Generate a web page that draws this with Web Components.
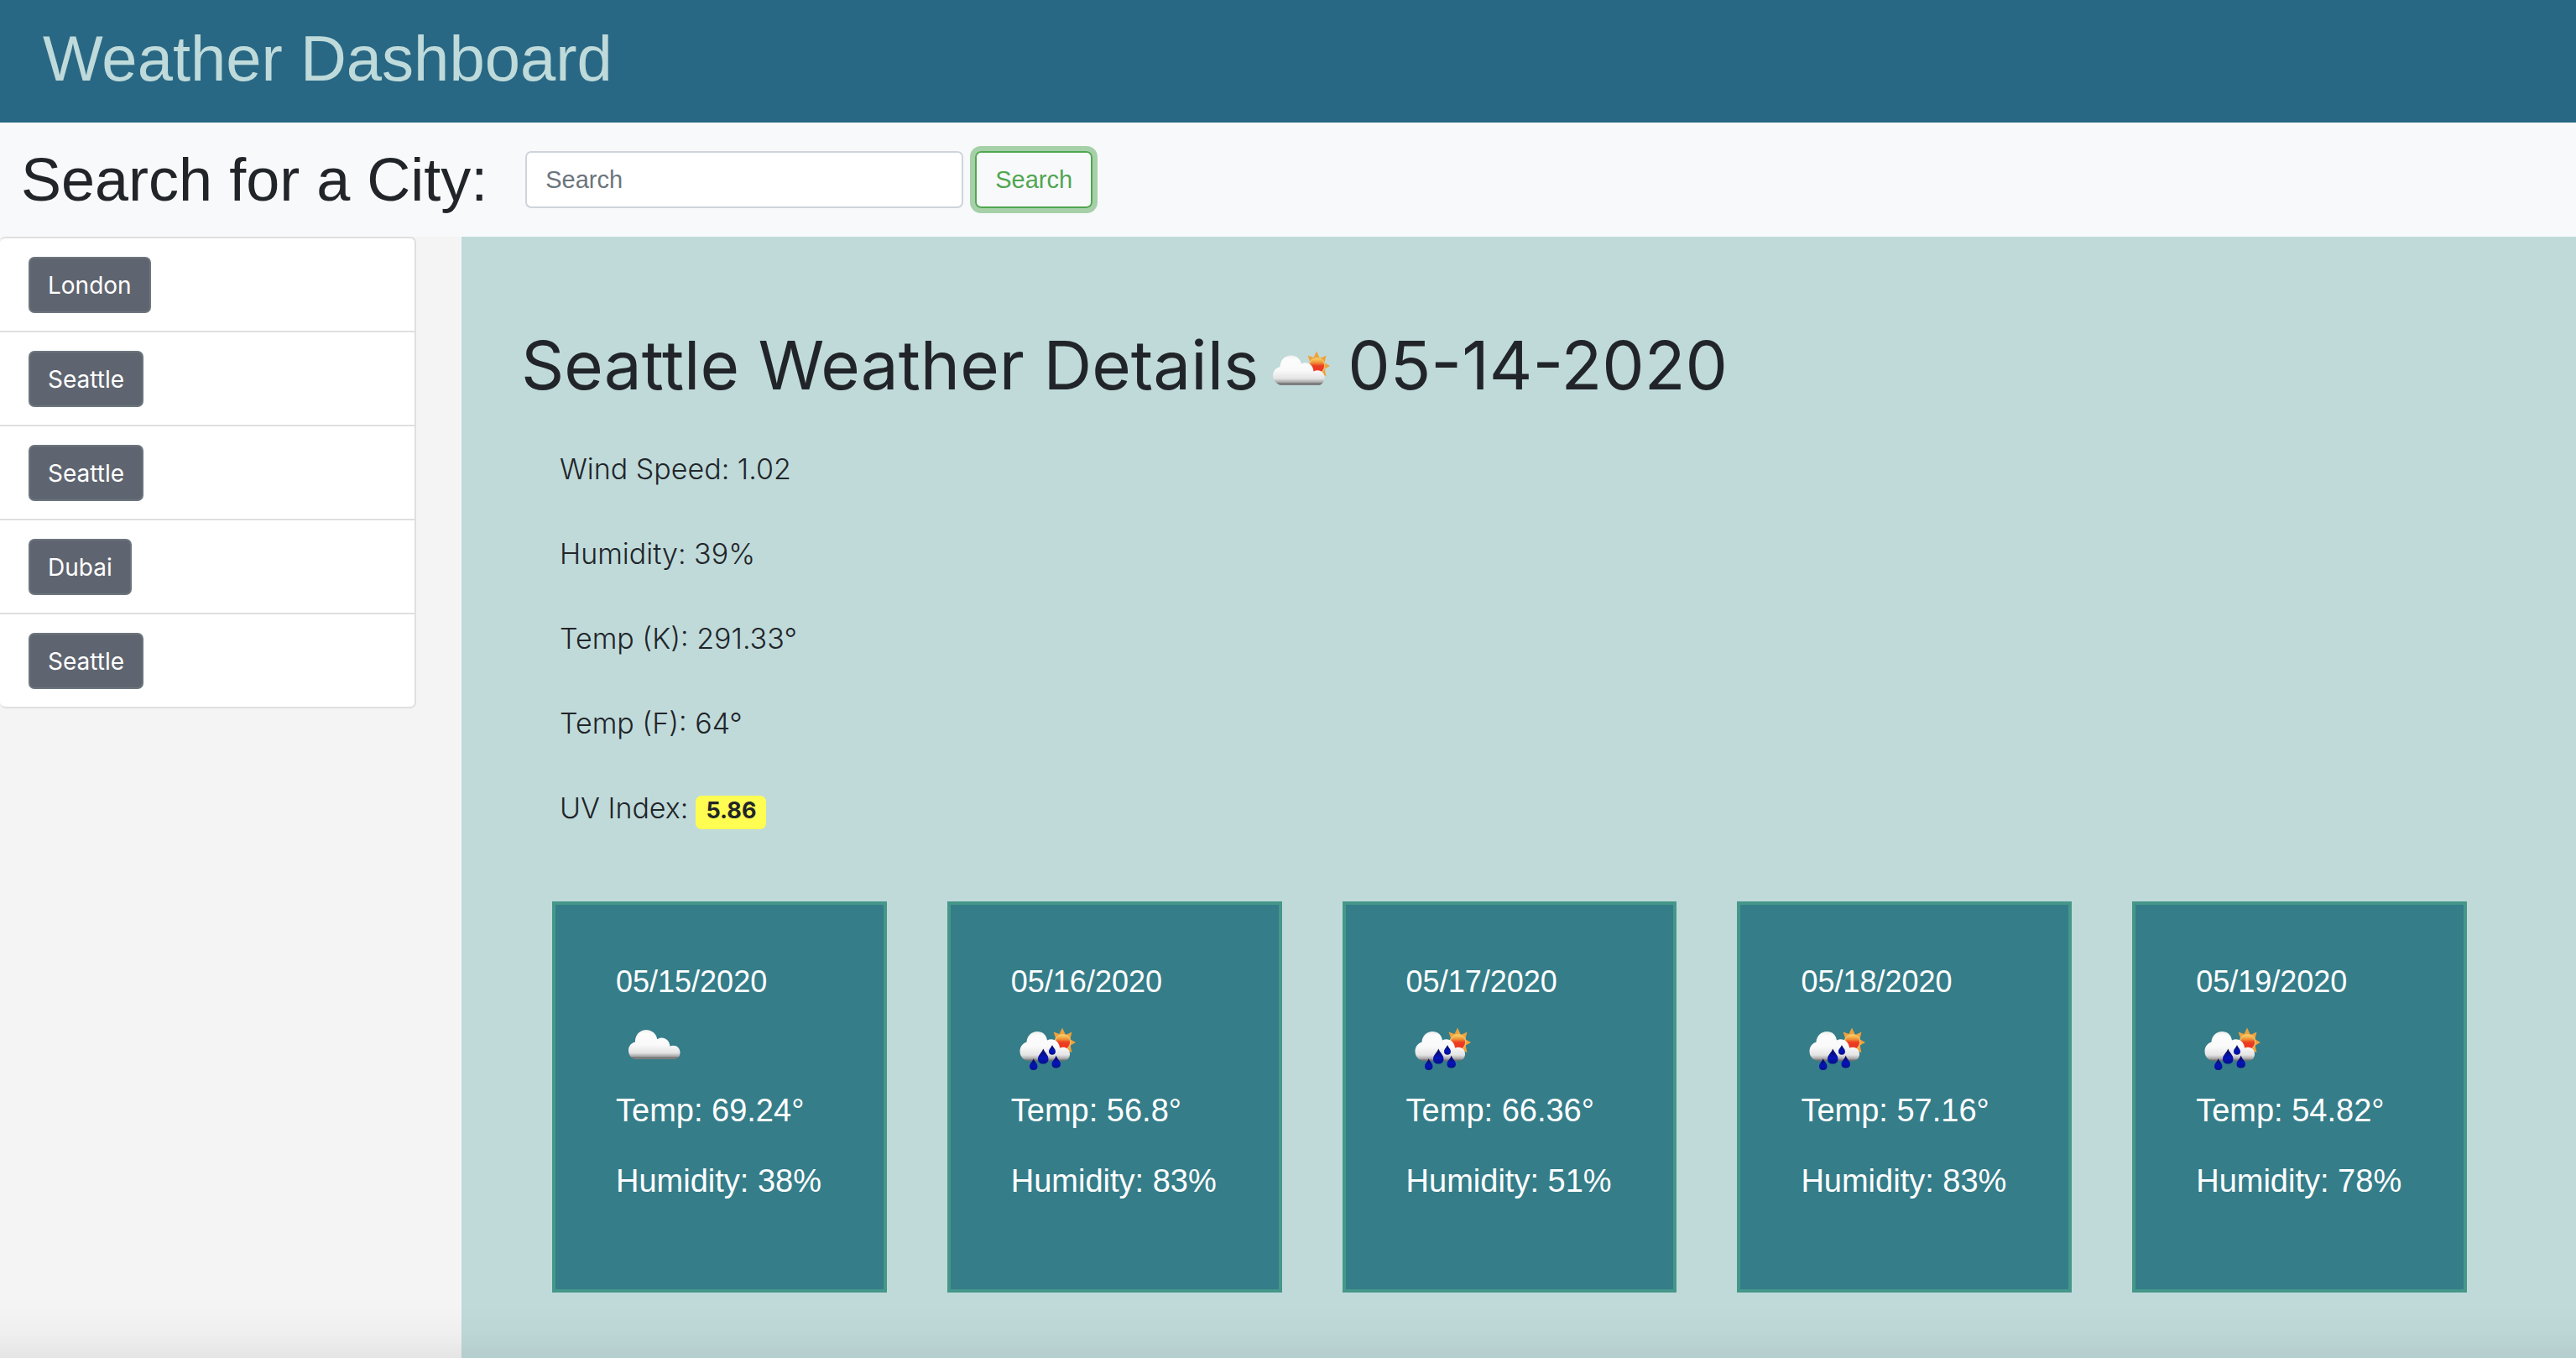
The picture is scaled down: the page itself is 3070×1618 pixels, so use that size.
<!DOCTYPE html>
<html lang="en">
<head>
<meta charset="utf-8">
<title>Weather Dashboard</title>
<style>
  body { margin: 0; background: #f4f4f4; color: #212529; font-family: Inter, "Noto Sans", sans-serif; }
</style>
</head>
<body>
<weather-app></weather-app>
<script>
function define(name, html, init) {
  const tpl = document.createElement('template');
  tpl.innerHTML = '<style>*{box-sizing:border-box;margin:0}:host{display:block;box-sizing:border-box}</style>' + html;
  customElements.define(name, class extends HTMLElement {
    constructor() {
      super();
      this.attachShadow({ mode: 'open' }).append(tpl.content.cloneNode(true));
    }
    connectedCallback() { if (init) init(this, this.shadowRoot); }
  });
}

const SUN = `
  <g fill="#efa23a">
    <path d="M61 20.5 L65 29 L57 29 Z"/><path d="M50.5 25.5 L59 28.5 L53.5 34 Z"/>
    <path d="M72.5 25.5 L70.5 34 L65 29 Z"/><path d="M77 38 L69 42.5 L69 33.5 Z"/>
    <path d="M72.5 50 L64 47 L70.5 41 Z"/>
  </g>
  <circle cx="61.5" cy="37.7" r="10" fill="#f3c06a"/>
  <circle cx="61.5" cy="37.9" r="8.6" fill="url(#sun)"/>`;
const DEFS = (top, bottom) => `<defs>
  <linearGradient id="sun" x1="0" y1="0" x2="0" y2="1">
    <stop offset="0" stop-color="#f9d35c"/><stop offset=".3" stop-color="#f08a35"/><stop offset=".5" stop-color="#ea3e22"/><stop offset="1" stop-color="#ee3322"/>
  </linearGradient>
  <linearGradient id="cloud" gradientUnits="userSpaceOnUse" x1="0" y1="${top}" x2="0" y2="${bottom}">
    <stop offset="0" stop-color="#ececec"/><stop offset=".12" stop-color="#fcfcfc"/><stop offset=".5" stop-color="#fafafa"/>
    <stop offset=".78" stop-color="#e4e4e4"/><stop offset=".9" stop-color="#a8a8a8"/><stop offset=".95" stop-color="#707070"/><stop offset="1" stop-color="#8a8a8a"/>
  </linearGradient>
  <linearGradient id="drop" x1="0" y1="0" x2="0" y2="1">
    <stop offset="0" stop-color="#0a0a50"/><stop offset=".6" stop-color="#0514b8"/><stop offset="1" stop-color="#04108a"/>
  </linearGradient></defs>`;
const ICONS = {
  cloudy: DEFS(23, 58) + `<path fill="url(#cloud)" d="M24 58 C18.500 58 15 53 15 47.500 C15 42 18.500 38.500 23 37.500 C22.500 29 29 23 36 23 C43 23 48.500 28 49.200 34.200 C56 29.500 64 34.500 64.500 42.500 C71 40 76.500 44 76.500 50 C76.500 54 74.500 58 70 58 Z"/>`,
  partly: DEFS(33, 69) + `<g transform="translate(1 8)">${SUN}</g><path fill="url(#cloud)" d="M19 69 C13.500 67 10 62.500 10 57.500 C10 52 13.500 48.500 18.500 47 C19 38.500 24.500 33.500 31.500 33.500 C38 33.500 42.500 37.500 44 43.500 C51 40 58 44.500 58.500 52.500 C66 49 72 54 71.500 60.500 C71 65 68.500 68 65.500 69 Z"/>`,
  rain: DEFS(25, 61) + SUN + `<path fill="url(#cloud)" d="M19 60 C14 58.500 10.500 54 10.500 48.500 C10.500 43 14 39 18.500 37.500 C19 30 24.500 25 31 25 C37.500 25 42 29 43 35.500 C49.500 32 57.500 36.500 58 44.500 C65.500 42 70.500 46.500 70 52.500 C69.500 57 67 59.500 63 60 Z"/>
    <g fill="url(#drop)">
      <path d="M26.700 57 C28 61 31.500 63 31.500 66.500 C31.500 69.500 29.500 71 26.700 71 C24 71 22 69.500 22 66.500 C22 63 25.500 61 26.700 57 Z"/>
      <path d="M38.300 45.500 C40 50 44.500 53 44.500 57.500 C44.500 61.500 42 63.500 38.300 63.500 C34.500 63.500 32 61.500 32 57.500 C32 53 36.800 50 38.300 45.500 Z"/>
      <path d="M49 41 C50 44 53 46 53 48.700 C53 51.300 51.500 52.700 49 52.700 C46.500 52.700 45 51.300 45 48.700 C45 46 48 44 49 41 Z"/>
      <path d="M53.700 53.500 C55 58 59 60 59 63.700 C59 67 56.800 68.500 53.700 68.500 C50.500 68.500 48.500 67 48.500 63.700 C48.500 60 52.500 58 53.700 53.500 Z"/>
    </g>`
};

define('weather-icon', `
  <style>:host{width:90px;height:90px;flex:none} svg{display:block}</style>
  <svg width="90" height="90" viewBox="0 0 90 90" aria-hidden="true"></svg>`,
  (el, root) => { root.querySelector('svg').innerHTML = ICONS[el.getAttribute('kind')]; });

define('app-header', `
  <style>
    :host{background:#296884;padding:24px 51px 30px}
    h1{font:400 76px/92px "Liberation Sans",Arial,sans-serif;color:#bfdada}
  </style>
  <h1><slot></slot></h1>`);

define('city-search', `
  <style>
    :host{background:#f8f9fb;padding:25px}
    form{display:flex;align-items:center;gap:14px;font-family:"Liberation Sans",Arial,sans-serif}
    label{font-size:72px;line-height:86px;margin-right:31px}
    input,button{height:68px;border-radius:7px;padding:0 22px;font:400 29px/44px "Liberation Sans",Arial,sans-serif}
    input{width:522px;border:2px solid #ced4da;background:#fff;color:#495057;outline:none}
    input::placeholder{color:#6c757d;opacity:1}
    button{border:2px solid #51a651;background:transparent;color:#51a651;box-shadow:0 0 0 6px #a6d0a8}
  </style>
  <form onsubmit="return false">
    <label for="q">Search for a City:</label>
    <input id="q" type="search" placeholder="Search">
    <button type="submit">Search</button>
  </form>`);

define('history-item', `
  <style>
    :host{padding:22px 34px 21px;border-bottom:2px solid #dfdfdf}
    :host(:last-of-type){border-bottom:0}
    button{display:block;height:67px;padding:0 21px;border:2px solid #6c757d;border-radius:7px;background:#5f6570;color:#fff;font:400 28px/44px Inter,sans-serif}
  </style>
  <button type="button"><slot></slot></button>`);

define('search-history', `
  <style>
    :host{padding-right:54px}
    div{background:#fff;border:2px solid #dfdfdf;border-left:0;border-radius:7px}
  </style>
  <div><slot></slot></div>`);

define('weather-details', `
  <style>
    h2{display:flex;align-items:center;font-weight:400;font-size:80px;line-height:104px;padding-left:71px}
    weather-icon{margin:0 9px 0 7px}
    div{display:flex;flex-direction:column;gap:57px;padding:50px 0 0 117px}
    p{display:flex;align-items:baseline;gap:9px;font-weight:300;font-size:34px;line-height:44px}
    strong{background:#fffc52;border-radius:7px;padding:4px 12px 8px;font-weight:700;font-size:27px;line-height:28px}
  </style>
  <h2><span>Seattle Weather Details</span><weather-icon kind="partly"></weather-icon><span>05-14-2020</span></h2>
  <div>
    <p>Wind Speed: 1.02</p>
    <p>Humidity: 39%</p>
    <p>Temp (K): 291.33°</p>
    <p>Temp (F): 64°</p>
    <p><span>UV Index:</span><strong>5.86</strong></p>
  </div>`);

define('forecast-card', `
  <style>
    :host{background:#357d89;border:4px solid #459789;padding:70px 72px 106px;color:#fff;font:400 38px/46px "Liberation Sans",Arial,sans-serif;white-space:nowrap}
    h3{font-weight:400;font-size:36px;line-height:44px}
    weather-icon{margin:12px 0 6px}
    p + p{margin-top:38px}
  </style>
  <h3></h3><weather-icon></weather-icon><p class="t"></p><p class="h"></p>`,
  (el, root) => {
    root.querySelector('h3').textContent = el.getAttribute('date');
    root.querySelector('.t').textContent = 'Temp: ' + el.getAttribute('temp') + '°';
    root.querySelector('.h').textContent = 'Humidity: ' + el.getAttribute('humidity') + '%';
    const old = root.querySelector('weather-icon'), icon = document.createElement('weather-icon');
    icon.setAttribute('kind', el.getAttribute('kind'));
    old.replaceWith(icon);
  });

define('weather-app', `
  <style>
    :host{display:flex;flex-direction:column;min-height:100vh}
    section{flex:1;display:grid;grid-template-columns:550px 1fr}
    main{background:#c0dada;padding:101px 0 78px}
    .days{display:grid;grid-template-columns:repeat(5,minmax(0,1fr));gap:72px;padding:86px 130px 0 108px}
    .fade{position:fixed;left:0;right:0;bottom:0;height:60px;pointer-events:none;background:linear-gradient(rgba(0,0,0,0),rgba(0,0,0,.02) 50%,rgba(0,0,0,.06))}
  </style>
  <app-header>Weather Dashboard</app-header>
  <city-search></city-search>
  <section>
    <search-history>
      <history-item>London</history-item>
      <history-item>Seattle</history-item>
      <history-item>Seattle</history-item>
      <history-item>Dubai</history-item>
      <history-item>Seattle</history-item>
    </search-history>
    <main>
      <weather-details></weather-details>
      <div class="days">
        <forecast-card date="05/15/2020" kind="cloudy" temp="69.24" humidity="38"></forecast-card>
        <forecast-card date="05/16/2020" kind="rain" temp="56.8" humidity="83"></forecast-card>
        <forecast-card date="05/17/2020" kind="rain" temp="66.36" humidity="51"></forecast-card>
        <forecast-card date="05/18/2020" kind="rain" temp="57.16" humidity="83"></forecast-card>
        <forecast-card date="05/19/2020" kind="rain" temp="54.82" humidity="78"></forecast-card>
      </div>
    </main>
  </section>
  <div class="fade"></div>`);
</script>
</body>
</html>
